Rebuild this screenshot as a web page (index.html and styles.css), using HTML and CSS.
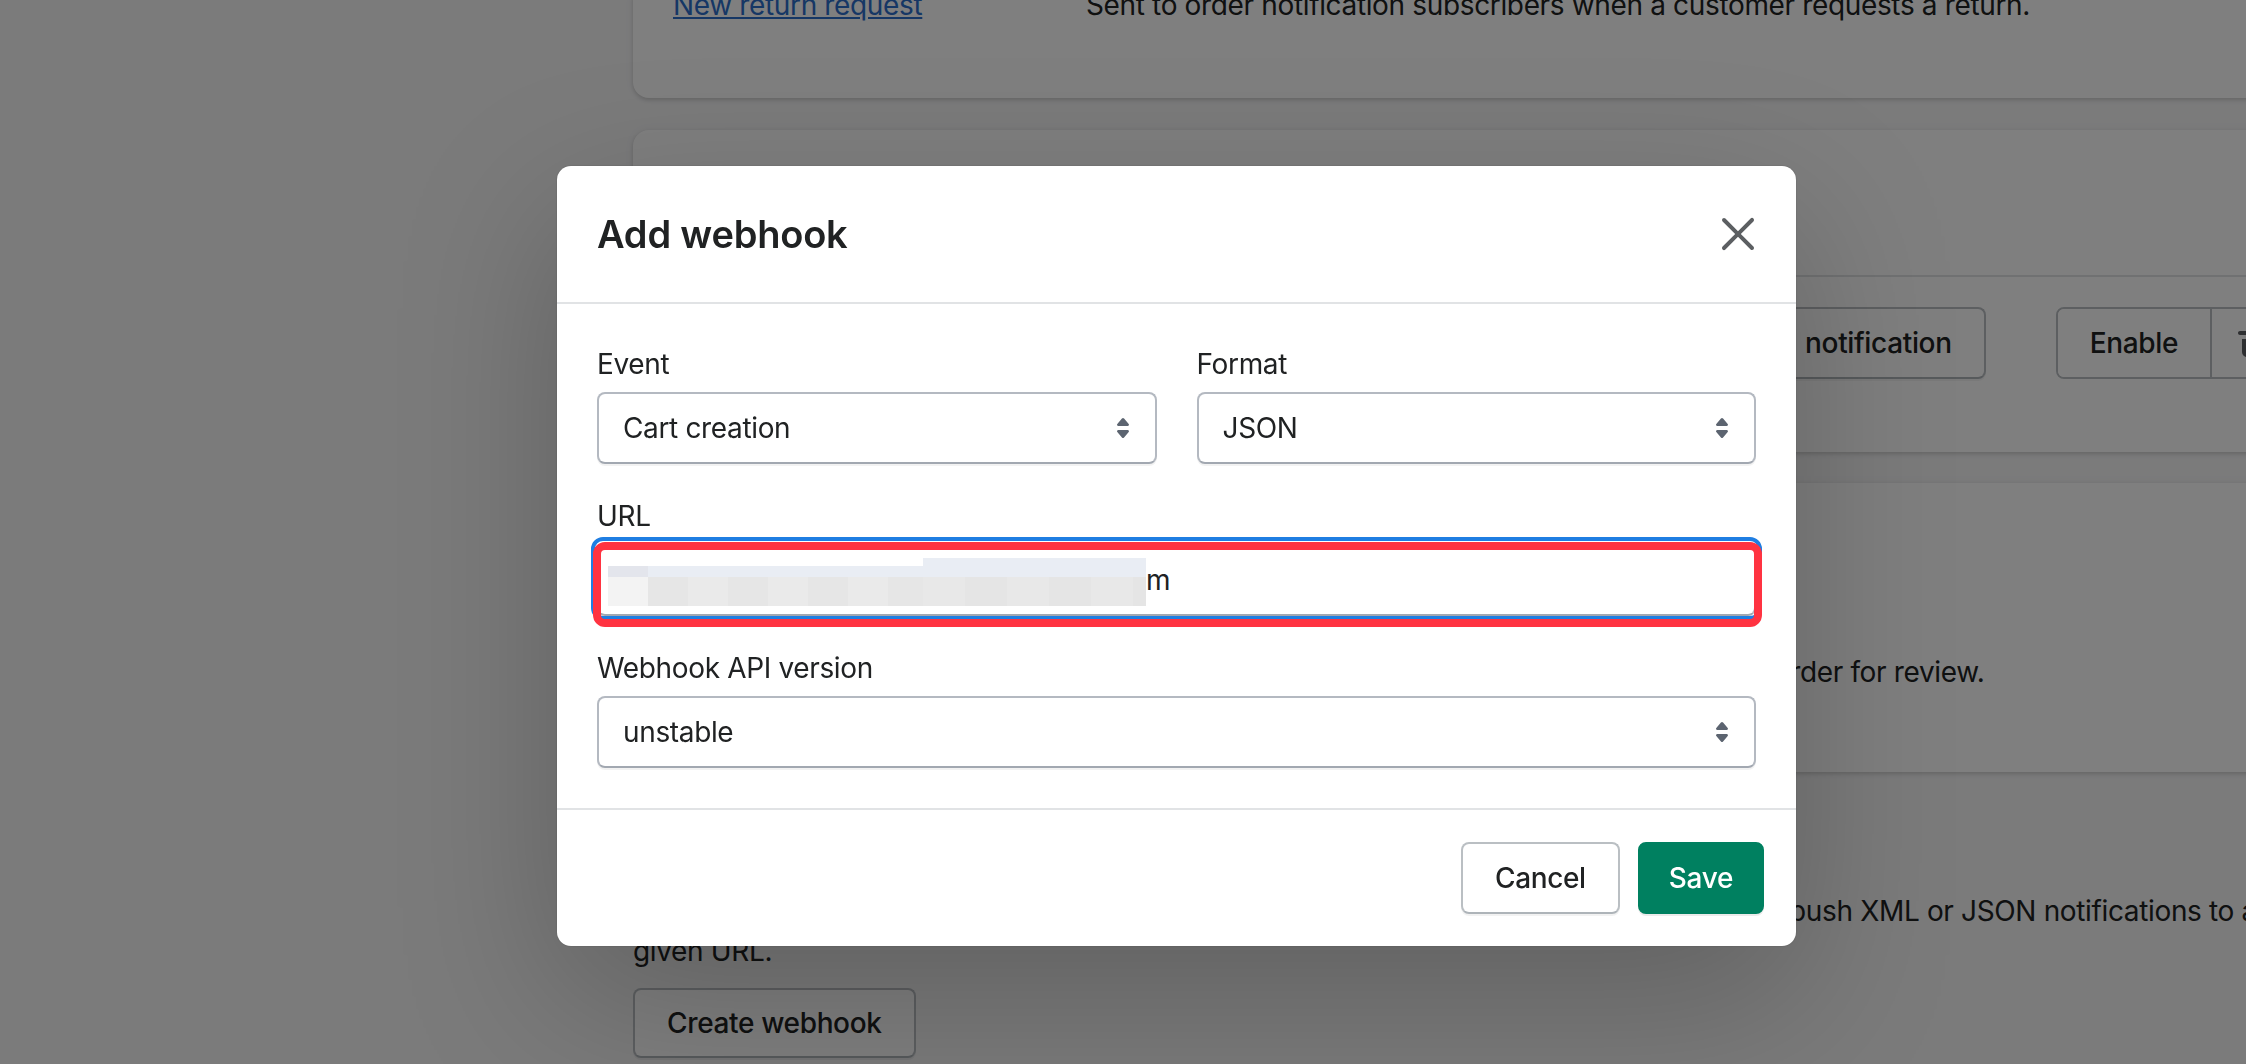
FILE: index.html
```html
<!DOCTYPE html>
<html lang="en">
<head>
<meta charset="utf-8">
<title>Add webhook</title>
<link rel="stylesheet" href="styles.css">
</head>
<body>
<div class="page">
  <div class="card card-returns">
    <div class="notif-row">
      <a class="notif-link" href="#">New return request</a>
      <p class="notif-desc">Sent to order notification subscribers when a customer requests a return.</p>
    </div>
  </div>

  <div class="card card-staff">
    <div class="staff-head">
      <h2 class="card-title">Staff order notifications</h2>
    </div>
    <div class="staff-row">
      <span class="recipient">orders@example.com</span>
      <div class="staff-actions">
        <button class="btn btn-test">Send test notification</button>
        <div class="seg">
          <button class="btn">Enable</button>
          <button class="btn btn-icon" aria-label="Delete">
            <svg viewBox="0 0 20 20" width="40" height="40"><path d="M8 3.994c0-1.101.895-1.994 2-1.994s2 .893 2 1.994h4c.552 0 1 .446 1 .997a1 1 0 0 1-1 .997H4c-.552 0-1-.447-1-.997s.448-.997 1-.997h4zM5 14.508V8h2v6.5a.5.5 0 0 0 .5.5H9V8h2v7h1.5a.5.5 0 0 0 .5-.5V8h2v6.508A2.496 2.496 0 0 1 12.5 17h-5C6.12 17 5 15.884 5 14.508z"/></svg>
          </button>
        </div>
      </div>
    </div>
  </div>

  <div class="card card-review">
    <h2 class="card-title">Order review</h2>
    <div class="notif-row review-row">
      <a class="notif-link" href="#">Order for review</a>
      <p class="notif-desc">Sent to subscribers when a customer submits a draft order for review.</p>
    </div>
  </div>

  <section class="webhooks">
    <h2 class="card-title">Webhooks</h2>
    <p class="webhooks-text">You can subscribe to events for your products and orders by creating web hooks that will push XML or JSON notifications to a given URL.</p>
    <button class="btn">Create webhook</button>
  </section>
</div>

<div class="backdrop"></div>

<div class="modal" role="dialog" aria-labelledby="modal-title">
  <div class="modal-header">
    <h1 class="modal-title" id="modal-title">Add webhook</h1>
    <button class="close" aria-label="Close">
      <svg viewBox="0 0 20 20" width="40" height="40"><path d="m11.414 10 6.293-6.293a1 1 0 1 0-1.414-1.414L10 8.586 3.707 2.293a1 1 0 0 0-1.414 1.414L8.586 10l-6.293 6.293a1 1 0 1 0 1.414 1.414L10 11.414l6.293 6.293A.998.998 0 0 0 18 17a.999.999 0 0 0-.293-.707L11.414 10z"/></svg>
    </button>
  </div>

  <div class="modal-body">
    <div class="row-2">
      <div class="field">
        <label class="label">Event</label>
        <div class="select">
          <span>Cart creation</span>
          <svg viewBox="0 0 20 20" width="40" height="40"><path d="M7.676 9h4.648c.563 0 .879-.603.53-1.014L10.531 5.24a.708.708 0 0 0-1.062 0L7.145 7.986C6.798 8.397 7.113 9 7.676 9zm4.648 2H7.676c-.563 0-.878.603-.53 1.014l2.323 2.746a.708.708 0 0 0 1.062 0l2.324-2.746c.347-.411.032-1.014-.531-1.014z"/></svg>
        </div>
      </div>
      <div class="field">
        <label class="label">Format</label>
        <div class="select">
          <span>JSON</span>
          <svg viewBox="0 0 20 20" width="40" height="40"><path d="M7.676 9h4.648c.563 0 .879-.603.53-1.014L10.531 5.24a.708.708 0 0 0-1.062 0L7.145 7.986C6.798 8.397 7.113 9 7.676 9zm4.648 2H7.676c-.563 0-.878.603-.53 1.014l2.323 2.746a.708.708 0 0 0 1.062 0l2.324-2.746c.347-.411.032-1.014-.531-1.014z"/></svg>
        </div>
      </div>
    </div>

    <div class="field">
      <label class="label">URL</label>
      <div class="input">
        <span class="redact">
          <span class="rd rd-a"></span>
          <span class="rd rd-b"></span>
          <span class="rd rd-c"></span>
        </span>
        <span class="input-text">m</span>
        <span class="focus-ring"></span>
        <span class="annotation"></span>
      </div>
    </div>

    <div class="field">
      <label class="label">Webhook API version</label>
      <div class="select">
        <span>unstable</span>
        <svg viewBox="0 0 20 20" width="40" height="40"><path d="M7.676 9h4.648c.563 0 .879-.603.53-1.014L10.531 5.24a.708.708 0 0 0-1.062 0L7.145 7.986C6.798 8.397 7.113 9 7.676 9zm4.648 2H7.676c-.563 0-.878.603-.53 1.014l2.323 2.746a.708.708 0 0 0 1.062 0l2.324-2.746c.347-.411.032-1.014-.531-1.014z"/></svg>
      </div>
    </div>
  </div>

  <div class="modal-footer">
    <button class="btn btn-cancel">Cancel</button>
    <button class="btn btn-primary">Save</button>
  </div>
</div>
</body>
</html>
```

FILE: styles.css
```css
* { box-sizing: border-box; }

html, body {
  margin: 0;
  padding: 0;
}

body {
  width: 2246px;
  height: 1064px;
  overflow: hidden;
  position: relative;
  background: #f6f6f7;
  font-family: Inter, "Noto Sans", "Liberation Sans", sans-serif;
  font-size: 28px;
  line-height: 40px;
  letter-spacing: -0.35px;
  color: #202223;
}

/* ---------- background page ---------- */
.page {
  width: 2333px;
  padding-left: 633px;
  margin-top: -15px;
}

.card {
  background: #fff;
  border-radius: 16px;
  box-shadow: 0 0 10px rgba(23, 24, 24, 0.05), 0 2px 4px rgba(0, 0, 0, 0.15);
}

.card-title {
  margin: 0;
  font-size: 30px;
  line-height: 40px;
  font-weight: 600;
}

.card-returns {
  padding: 0 40px 73px;
}

.notif-row {
  display: flex;
}

.notif-link {
  flex: none;
  width: 413px;
  color: #2c6ecb;
  text-decoration: underline;
}

.notif-desc {
  margin: 0;
  white-space: nowrap;
}

.card-staff {
  margin-top: 32px;
}

.staff-head {
  height: 145px;
  padding: 40px 40px 0;
}

.staff-row {
  display: flex;
  align-items: center;
  border-top: 2px solid #e1e3e5;
  padding: 30px 40px 73px;
}

.recipient {
  color: #6d7175;
}

.staff-actions {
  margin-left: auto;
  display: flex;
  gap: 70px;
}

.btn {
  height: 72px;
  padding: 0 32px;
  border: 2px solid #babfc3;
  border-bottom-color: #aeb4b9;
  border-radius: 8px;
  background: #fff;
  color: #202223;
  font-family: inherit;
  font-size: 28px;
  line-height: 40px;
  letter-spacing: -0.35px;
  font-weight: 500;
  box-shadow: 0 2px 0 rgba(0, 0, 0, 0.05);
  display: inline-flex;
  align-items: center;
  justify-content: center;
}

.btn-test {
  word-spacing: 8px;
}

.seg {
  display: flex;
  border: 2px solid #babfc3;
  border-radius: 8px;
  overflow: hidden;
}

.seg .btn {
  height: 68px;
  border: 0;
  border-radius: 0;
  box-shadow: none;
}

.seg .btn + .btn {
  border-left: 2px solid #babfc3;
}

.btn-icon {
  width: 81px;
  padding: 0;
  justify-content: flex-start;
  padding-left: 20px;
}

.btn-icon svg {
  fill: #5c5f62;
}

.card-review {
  margin-top: 31px;
  height: 289px;
  padding: 40px;
}

.review-row {
  margin-top: 89px;
}

.webhooks {
  padding-top: 40px;
}

.webhooks-text {
  margin: 39px 0 17px;
  width: 1640px;
}

.webhooks .btn {
  height: 70px;
}

/* ---------- overlay ---------- */
.backdrop {
  position: fixed;
  inset: 0;
  background: rgba(0, 0, 0, 0.5);
}

.modal {
  position: absolute;
  left: 557px;
  top: 166px;
  width: 1239px;
  background: #fff;
  border-radius: 14px;
  box-shadow: 0 52px 160px rgba(0, 0, 0, 0.22), 0 0 2px rgba(0, 0, 0, 0.2);
  overflow: hidden;
}

.modal-header {
  height: 138px;
  display: flex;
  align-items: center;
  justify-content: space-between;
  padding: 0 38px 0 40px;
  border-bottom: 2px solid #e1e3e5;
}

.modal-title {
  margin: 0;
  font-size: 38px;
  line-height: 56px;
  font-weight: 600;
  letter-spacing: -0.2px;
}

.close {
  width: 40px;
  height: 40px;
  padding: 0;
  border: 0;
  background: none;
  display: flex;
}

.close svg {
  fill: #5c5f62;
}

.modal-body {
  padding: 40px;
  display: flex;
  flex-direction: column;
  gap: 32px;
}

.row-2 {
  display: grid;
  grid-template-columns: 1fr 1fr;
  gap: 40px;
}

.label {
  display: block;
  margin-bottom: 8px;
}

.select {
  height: 72px;
  display: flex;
  align-items: center;
  justify-content: space-between;
  padding: 0 12px 0 24px;
  border: 2px solid #b4b9c1;
  border-bottom-color: #a2a8b1;
  border-radius: 8px;
  background: #fff;
  box-shadow: 0 2px 0 rgba(0, 0, 0, 0.05);
}

.select svg {
  flex: none;
  fill: #5c6470;
}

.input {
  position: relative;
  height: 72px;
  display: flex;
  align-items: center;
  padding-left: 9px;
  border: 2px solid #b4b9c1;
  border-bottom-color: #a2a8b1;
  border-radius: 8px;
  background: #fff;
}

.redact {
  display: flex;
  align-items: flex-end;
  margin-top: 4px;
  height: 48px;
}

.rd {
  display: block;
}

.rd-a {
  width: 40px;
  height: 40px;
  background: linear-gradient(to bottom, #e3e5ec 0 11px, #f3f3f3 11px 100%);
}

.rd-b {
  width: 275px;
  height: 40px;
  background:
    linear-gradient(to bottom, #e9edf4 0 11px, transparent 11px 100%),
    repeating-linear-gradient(to right, #e6e6e6 0 40px, #eaeaea 40px 80px);
}

.rd-c {
  width: 223px;
  height: 48px;
  background:
    linear-gradient(to bottom, #e9edf4 0 19px, transparent 19px 100%),
    repeating-linear-gradient(to right, #e8e8e8 0 42px, #e5e5e5 42px 84px);
}

.input-text {
  color: #202223;
}

.focus-ring {
  position: absolute;
  top: -9px;
  left: -8px;
  right: -8px;
  bottom: -6px;
  border: 4px solid #1f7ee2;
  border-radius: 12px;
}

.annotation {
  position: absolute;
  top: -4px;
  left: -6px;
  right: -8px;
  bottom: -13px;
  border: 8px solid #ff3341;
  border-radius: 12px;
}

.modal-footer {
  display: flex;
  justify-content: flex-end;
  gap: 18px;
  padding: 32px;
  border-top: 2px solid #e1e3e5;
}

.btn-primary {
  padding: 0 29px;
  background: #008060;
  border-color: #008060;
  color: #fff;
  box-shadow: 0 2px 0 rgba(0, 0, 0, 0.08);
}
```
